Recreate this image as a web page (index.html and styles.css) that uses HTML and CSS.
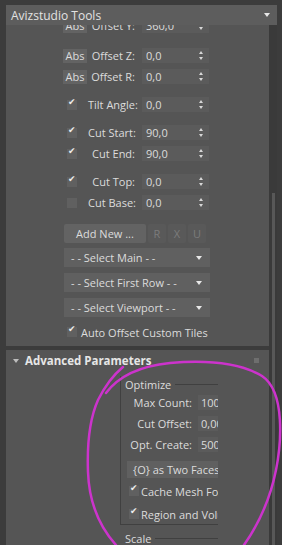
FILE: index.html
```html
<!DOCTYPE html>
<html lang="en">
<head>
  <meta charset="UTF-8">
  <meta name="viewport" content="width=device-width, initial-scale=1.0">
  <title>Avizstudio Tools</title>
  <link rel="stylesheet" href="styles.css">
</head>
<body>
  <div class="titlebar">
    <span>Avizstudio Tools</span>
    <span class="tri-down"></span>
  </div>

  <div class="main">
    <div class="scroller">
      <!-- rollout: tiles -->
      <div class="rollout first">
        <div class="row"><span class="lead"><span class="btn abs">Abs</span></span><span class="label">Offset Y:</span><span class="spin">360,0<i></i></span></div>
        <div class="row top"><span class="lead"><span class="btn abs">Abs</span></span><span class="label">Offset Z:</span><span class="spin">0,0<i></i></span></div>
        <div class="row"><span class="lead"><span class="btn abs">Abs</span></span><span class="label">Offset R:</span><span class="spin">0,0<i></i></span></div>
        <div class="row gap"><span class="lead"><span class="chk on"></span></span><span class="label">Tilt Angle:</span><span class="spin">0,0<i></i></span></div>
        <div class="row gap"><span class="lead"><span class="chk on"></span></span><span class="label">Cut Start:</span><span class="spin">90,0<i></i></span></div>
        <div class="row"><span class="lead"><span class="chk on"></span></span><span class="label">Cut End:</span><span class="spin">90,0<i></i></span></div>
        <div class="row gap"><span class="lead"><span class="chk on"></span></span><span class="label">Cut Top:</span><span class="spin">0,0<i></i></span></div>
        <div class="row"><span class="lead"><span class="chk"></span></span><span class="label">Cut Base:</span><span class="spin">0,0<i></i></span></div>

        <div class="btnrow">
          <span class="btn wide">Add New ...</span>
          <span class="btn small off">R</span>
          <span class="btn small off">X</span>
          <span class="btn small off">U</span>
        </div>
        <div class="drop">- - Select Main - -<span class="tri-down"></span></div>
        <div class="drop">- - Select First Row - -<span class="tri-down"></span></div>
        <div class="drop">- - Select Viewport - -<span class="tri-down"></span></div>
        <div class="checkline"><span class="chk on"></span>Auto Offset Custom Tiles</div>
      </div>

      <!-- rollout: advanced -->
      <div class="rollout second">
        <div class="rhead">
          <span class="tri-small"></span>
          <span class="rtitle">Advanced Parameters</span>
          <span class="grip"></span>
        </div>
        <div class="clip">
          <div class="group">
            <div class="gtitle">Optimize</div>
            <div class="grow"><span class="glabel">Max Count:</span><span class="gfield">100</span></div>
            <div class="grow"><span class="glabel">Cut Offset:</span><span class="gfield">0,001</span></div>
            <div class="grow"><span class="glabel">Opt. Create:</span><span class="gfield">500</span></div>
            <div class="gbtn">{O} as Two Faces</div>
            <div class="gcheck"><span class="chk on"></span>Cache Mesh For Render</div>
            <div class="gcheck"><span class="chk on"></span>Region and Volume</div>
          </div>
          <div class="gtitle scale">Scale</div>
        </div>
      </div>
    </div>
    <div class="scrollbar"><div class="thumb"></div></div>
  </div>

  <svg class="scribble" width="282" height="545" viewBox="0 0 282 545">
    <path d="M123 367 C112 376 104 388 98 400 C90 418 87 445 88 472 C89 500 98 525 116 545"/>
    <path d="M106 393 C118 377 140 366 170 363 C205 360 240 363 262 376 C286 392 281 445 276 470 C270 500 258 525 244 545"/>
  </svg>
</body>
</html>
```

FILE: styles.css
```css
* { box-sizing: border-box; }
body { margin: 0; width: 282px; height: 545px; overflow: hidden; position: relative; background: #3c3c3c; color: #dcdcdc; font-family: "Open Sans", "Noto Sans", sans-serif; font-size: 11px; }

.titlebar { height: 20px; margin: 5px 5px 0 6px; background: #5d5d5d; display: flex; align-items: center; justify-content: space-between; padding: 0 7px 0 5px; font-size: 12px; color: #e2e2e2; }
.tri-down { width: 0; height: 0; border-left: 3px solid transparent; border-right: 3px solid transparent; border-top: 4px solid #e8e8e8; }

.main { display: flex; height: 520px; padding-left: 6px; }
.scroller { width: 263px; overflow: hidden; }
.scrollbar { width: 8px; background: #3a3a3a; display: flex; justify-content: center; }
.thumb { width: 3px; margin-top: 168px; height: 360px; background: #585858; }

.rollout { background: #555555; }
.first { margin-top: -10px; padding-bottom: 4px; }
.second { margin-top: 4px; height: 200px; }

.row { display: flex; align-items: center; height: 21px; padding-left: 57px; }
.row.top { margin-top: 9px; }
.row.gap { margin-top: 7px; }
.lead { width: 25px; display: flex; align-items: center; }
.label { width: 47px; text-align: right; margin-right: 7px; white-space: nowrap; }
.spin { width: 67px; height: 15px; background: #5b5b5b; display: flex; align-items: center; justify-content: space-between; padding: 0 5px 0 4px; position: relative; }
.spin i { width: 5px; height: 9px; position: relative; }
.spin i::before, .spin i::after { content: ""; position: absolute; left: 0; border-left: 2.5px solid transparent; border-right: 2.5px solid transparent; }
.spin i::before { top: 0; border-bottom: 3px solid #d8d8d8; }
.spin i::after { bottom: 0; border-top: 3px solid #d8d8d8; }

.btn { background: #636363; display: inline-flex; align-items: center; justify-content: center; }
.abs { width: 24px; height: 14px; }
.chk { width: 10px; height: 10px; background: #606060; margin-left: 4px; position: relative; display: inline-block; flex: none; }
.chk.on::after { content: "\2714"; position: absolute; left: 1px; top: -3px; font-size: 9px; color: #eeeeee; font-family: "DejaVu Sans", sans-serif; }

.btnrow { display: flex; gap: 2px; padding-left: 58px; margin-top: 11px; height: 19px; }
.btnrow .btn { height: 19px; border-radius: 2px; }
.wide { width: 82px; }
.small { width: 18px; background: #595959; }
.off { color: #7c7c7c; }

.drop { width: 146px; height: 19px; margin: 6px 0 0 58px; background: #606060; display: flex; align-items: center; justify-content: space-between; padding: 0 8px 0 7px; }
.btnrow + .drop { margin-top: 5px; }

.checkline { display: flex; align-items: center; gap: 4px; height: 20px; margin-top: 5px; padding-left: 57px; }

.rhead { height: 19px; display: flex; align-items: center; padding: 2px 10px 0 7px; }
.tri-small { width: 0; height: 0; border-left: 3px solid transparent; border-right: 3px solid transparent; border-top: 4px solid #bdbdbd; }
.rtitle { font-weight: bold; font-size: 11.5px; margin-left: 6px; flex: 1; color: #e6e6e6; }
.grip { width: 5px; height: 5px; background-image: radial-gradient(#8a8a8a 0.6px, transparent 0.8px); background-size: 2px 2px; }

.clip { width: 212px; overflow: hidden; padding-left: 114px; }
.group { width: 120px; border-left: 1px solid #404040; border-bottom: 1px solid #404040; margin-top: 15px; }
.gtitle { position: relative; height: 16px; margin-top: -8px; padding-left: 4px; display: flex; align-items: center; }
.gtitle::after { content: ""; height: 1px; background: #404040; width: 49px; margin-left: 4px; }
.gtitle.scale { margin-top: 5px; padding-left: 5px; }
.gtitle.scale::after { width: 68px; }
.grow { display: flex; align-items: center; height: 21px; }
.glabel { width: 71px; text-align: right; white-space: nowrap; }
.gfield { background: #5b5b5b; height: 15px; width: 40px; margin-left: 6px; padding-left: 3px; display: flex; align-items: center; }
.gbtn { margin: 6px 0 0 6px; height: 17px; width: 120px; background: #606060; display: flex; align-items: center; padding-left: 6px; white-space: nowrap; }
.gcheck { display: flex; align-items: center; gap: 2px; height: 20px; margin-top: 3px; padding-left: 4px; white-space: nowrap; }

.scribble { position: absolute; left: 0; top: 0; pointer-events: none; }
.scribble path { fill: none; stroke: #cc33cc; stroke-width: 2.5; stroke-linecap: round; }
```
